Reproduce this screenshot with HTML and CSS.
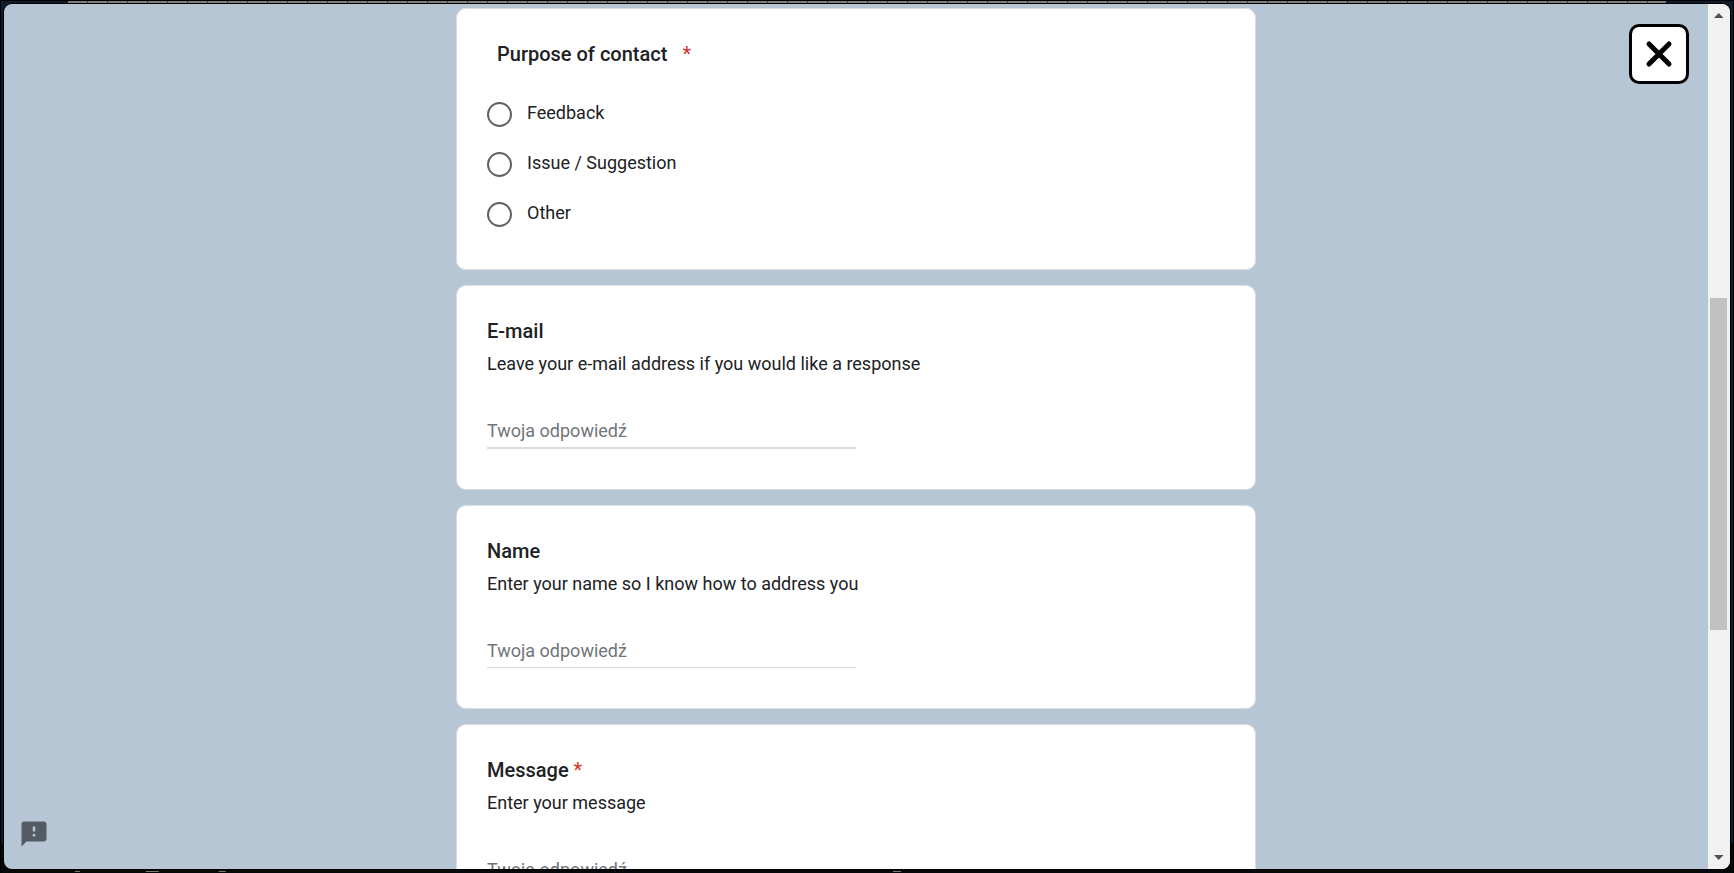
FILE: index.html
```html
<!DOCTYPE html>
<html lang="pl">
<head>
<meta charset="utf-8">
<title>Contact</title>
<link rel="stylesheet" href="styles.css">
</head>
<body>
<div class="page">
  <div class="ruler"></div>
  <svg class="marks" viewBox="0 0 1734 2" preserveAspectRatio="none" aria-hidden="true">
    <path fill="#77797b" d="M74 0h5v1h-5zM145 0h13v1h-13zM218 0h7v1h-7zM893 0h8v1h-8z"/>
  </svg>
  <main class="dialog">
    <form class="form">
      <fieldset class="card purpose">
        <legend class="legend"><span class="title">Purpose of contact</span><span class="required">*</span></legend>
        <div class="options">
          <label class="option"><input class="radio" type="radio" name="purpose"><span class="option-text">Feedback</span></label>
          <label class="option"><input class="radio" type="radio" name="purpose"><span class="option-text">Issue / Suggestion</span></label>
          <label class="option"><input class="radio" type="radio" name="purpose"><span class="option-text">Other</span></label>
        </div>
      </fieldset>
      <section class="card">
        <label class="title" for="email">E-mail</label>
        <p class="hint">Leave your e-mail address if you would like a response</p>
        <input class="answer answer-thick" id="email" type="text" placeholder="Twoja odpowiedź">
      </section>
      <section class="card">
        <label class="title" for="name">Name</label>
        <p class="hint">Enter your name so I know how to address you</p>
        <input class="answer" id="name" type="text" placeholder="Twoja odpowiedź">
      </section>
      <section class="card">
        <label class="title" for="message">Message <span class="required">*</span></label>
        <p class="hint">Enter your message</p>
        <input class="answer" id="message" type="text" placeholder="Twoja odpowiedź">
      </section>
    </form>
    <div class="scrollbar" aria-hidden="true">
      <svg class="arrow" viewBox="0 0 21 21"><path d="M6 14h9.500L10.750 9z"/></svg>
      <div class="track"><div class="thumb"></div></div>
      <svg class="arrow" viewBox="0 0 21 21"><path d="M6 7h9.500L10.750 12z"/></svg>
    </div>
    <button class="close" type="button" aria-label="Close">
      <svg class="close-icon" viewBox="0 0 30 30"><path d="M5 5l20 20M25 5L5 25"/></svg>
    </button>
    <button class="report" type="button" aria-label="Report a problem">
      <svg class="report-icon" viewBox="0 0 24 24"><path d="M20 2H4c-1.100 0-1.990.9-1.990 2L2 22l4-4h14c1.100 0 2-.9 2-2V4c0-1.100-.9-2-2-2zm-7 12h-2v-2h2v2zm0-4h-2V6h2v4z"/></svg>
    </button>
  </main>
</div>
</body>
</html>
```

FILE: styles.css
```css
* {
  box-sizing: border-box;
}

body {
  margin: 0;
  background: #000;
  font-family: Roboto, "Liberation Sans", sans-serif;
  color: #202124;
}

.page {
  position: relative;
  height: 100vh;
  overflow: hidden;
  padding: 3px 3px 4px;
  border: solid #000;
  border-width: 1px 1px 0;
  background: linear-gradient(#0f1c2b calc(100% - 30px), #070809 calc(100% - 30px));
}

.ruler {
  position: absolute;
  top: 0;
  left: 67px;
  right: 67px;
  height: 2px;
  background: repeating-linear-gradient(90deg, #807a79 0 19px, #403d3d 19px 20px);
}

.marks {
  position: absolute;
  left: 0;
  bottom: 0;
  width: 100%;
  height: 2px;
}

.dialog {
  position: relative;
  display: flex;
  height: 100%;
  overflow: hidden;
  border-radius: 8px;
  background: #b7c6d5;
  box-shadow: 0 0 0 1px #000;
}

.form {
  flex: 1;
  display: flex;
  flex-direction: column;
  align-items: center;
  gap: 15px;
  padding-top: 4px;
}

.card {
  flex: none;
  width: 100%;
  max-width: 800px;
  min-width: 0;
  margin: 0;
  padding: 30px;
  border: 1px solid #dadce0;
  border-radius: 10px;
  background: #fff;
}

.purpose {
  padding-bottom: 40px;
}

.legend {
  float: left;
  width: 100%;
  display: flex;
  gap: 15px;
  padding: 0 10px;
}

.title {
  display: block;
  font-size: 20px;
  line-height: 30px;
  font-weight: 500;
}

.required {
  font-size: 20px;
  line-height: 30px;
  font-weight: 400;
  color: #d93025;
}

.options {
  clear: both;
  display: flex;
  flex-direction: column;
  gap: 20px;
  padding-top: 30px;
}

.option {
  display: flex;
  align-items: center;
  gap: 15px;
  height: 30px;
}

.radio {
  appearance: none;
  width: 25px;
  height: 25px;
  margin: 0;
  border: 2px solid #5f6368;
  border-radius: 50%;
}

.radio:checked {
  background: radial-gradient(#5f6368 6px, transparent 7px);
}

.option-text {
  padding-bottom: 2px;
  font-size: 18px;
  line-height: 26px;
}

.hint {
  margin: 5px 0 0;
  font-size: 18px;
  line-height: 25px;
}

.answer {
  display: block;
  width: 50%;
  height: 40px;
  margin: 32px 0 10px;
  padding: 6px 0 0;
  border: 0;
  border-bottom: 1px solid #dadce0;
  outline: 0;
  background: transparent;
  font: 18px/30px Roboto, "Liberation Sans", sans-serif;
  color: #202124;
}

.answer-thick {
  height: 41px;
  border-bottom-width: 2px;
}

.answer::placeholder {
  color: #70757a;
}

.scrollbar {
  display: flex;
  flex-direction: column;
  width: 22px;
  background: #f1f1f1;
}

.arrow {
  width: 21px;
  height: 21px;
  fill: #505050;
}

.track {
  flex: 1;
  display: flex;
  flex-direction: column;
  padding: 0 3px 0 2px;
}

.thumb {
  height: 332px;
  margin-top: 273px;
  background: #c1c1c1;
}

.close {
  position: absolute;
  top: 20px;
  right: 41px;
  display: grid;
  place-items: center;
  width: 60px;
  height: 60px;
  padding: 0;
  border: 3px solid #000;
  border-radius: 10px;
  background: #fff;
}

.close-icon {
  width: 30px;
  height: 30px;
  fill: none;
  stroke: #000;
  stroke-width: 5;
  stroke-linecap: round;
}

.report {
  position: absolute;
  left: 15px;
  bottom: 20px;
  padding: 0;
  border: 0;
  background: none;
}

.report-icon {
  display: block;
  width: 30px;
  height: 30px;
  fill: #535b63;
}
```
